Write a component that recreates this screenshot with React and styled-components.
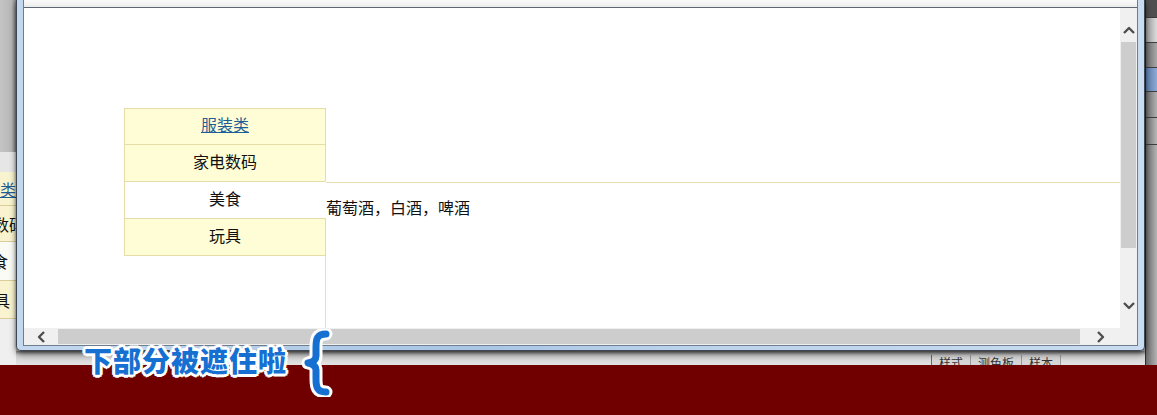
import styled, { createGlobalStyle } from "styled-components"

const GlobalStyle = createGlobalStyle`
  html, body {
    margin: 0;
    padding: 0;
    background: #c8c8c8;
  }
  body {
    font-family: "Noto Sans CJK SC", "Liberation Sans", sans-serif;
    font-size: 16px;
    color: #111;
  }
`

const categories = [
  { name: "服装类", link: true },
  { name: "家电数码" },
  { name: "美食", active: true },
  { name: "玩具" },
]

// the same menu, seen behind the window's left edge
const behindRows = [
  { name: "类", link: true, shift: 0, height: 33 },
  { name: "数码", shift: -9, height: 35 },
  { name: "食", shift: 8, height: 38, active: true },
  { name: "具", shift: 6, height: 37 },
]

const Chevron = ({ dir }) => {
  const pts = {
    up: "1,7 6,2 11,7",
    down: "1,2 6,7 11,2",
    left: "7,1 2,6 7,11",
    right: "2,1 7,6 2,11",
  }[dir]
  const vertical = dir === "up" || dir === "down"
  return (
    <svg width={vertical ? 12 : 9} height={vertical ? 9 : 12} viewBox={vertical ? "0 0 12 9" : "0 0 9 12"}>
      <polyline points={pts} fill="none" stroke="#4e4e4e" strokeWidth="2.4" strokeLinejoin="round" />
    </svg>
  )
}

const App = () => {
  return (
    <Screen>
      <GlobalStyle />
      <Desk>
        <BehindLeft>
          <BehindGray />
          <BehindLight />
          {behindRows.map(({ name, link, shift, height, active }) => (
            <BehindRow key={name} $h={height} $active={active}>
              <BehindText $shift={shift} $link={link}>{name}</BehindText>
            </BehindRow>
          ))}
          <BehindRest />
        </BehindLeft>

        <Middle>
          <Window>
            <Inner>
              <TopStrip />
              <Client>
                <Viewport>
                  <TabBox>
                    <Menu>
                      {categories.map(({ name, link, active }) => (
                        <MenuItem key={name} $active={active}>
                          {link ? <a href="#">{name}</a> : name}
                        </MenuItem>
                      ))}
                    </Menu>
                    <Panel>葡萄酒，白酒，啤酒</Panel>
                  </TabBox>
                </Viewport>
                <VScroll>
                  <VButton $top>
                    <Chevron dir="up" />
                  </VButton>
                  <VThumb />
                  <VTrack />
                  <VButton>
                    <Chevron dir="down" />
                  </VButton>
                </VScroll>
                <HScroll>
                  <HButton>
                    <Chevron dir="left" />
                  </HButton>
                  <HThumb />
                  <HButton $right>
                    <Chevron dir="right" />
                  </HButton>
                </HScroll>
                <Corner />
              </Client>
            </Inner>
          </Window>
          <Shelf>
            <ShelfTabs>
              <ShelfTab>样式</ShelfTab>
              <ShelfTab>测色板</ShelfTab>
              <ShelfTab>样本</ShelfTab>
            </ShelfTabs>
          </Shelf>
        </Middle>

        <BehindRight>
          <RightBlock $h={17} $bg="#4f4f4f" />
          <RightBlock $h={24} $bg="linear-gradient(to right, #9a9a9a, #dcdcdc)" />
          <RightBlock $h={24} $bg="linear-gradient(to right, #6a6a6a, #a9a9a9)" />
          <RightBlock $h={23} $bg="linear-gradient(to right, #5a7aa8, #8eaad6)" />
          <RightBlock $h={25} $bg="linear-gradient(to right, #6a6a6a, #b2b2b2)" />
          <RightBlock $h={26} $bg="linear-gradient(to right, #6e6e6e, #b8b8b8)" />
          <RightBlock $h={999} $bg="linear-gradient(to right, #6a6a6a, #b4b4b4)" />
        </BehindRight>
      </Desk>
      <RedBand />

      <Callout>下部分被遮住啦</Callout>
      <Brace width="32" height="68" viewBox="0 0 32 68">
        <path d="M25 5 C16 5 15 10 15 18 L15 27 C15 31 12 33 7 34 C12 35 15 37 15 41 L15 50 C15 58 16 63 25 63"
          fill="none" stroke="#ffffff" strokeWidth="13" strokeLinecap="round" strokeLinejoin="round" />
        <path d="M25 5 C16 5 15 10 15 18 L15 27 C15 31 12 33 7 34 C12 35 15 37 15 41 L15 50 C15 58 16 63 25 63"
          fill="none" stroke="#1570d2" strokeWidth="7" strokeLinecap="round" strokeLinejoin="round" />
      </Brace>
    </Screen>
  )
}

export default App

const Screen = styled.div`
  position: relative;
  width: 1157px;
  height: 415px;
  overflow: hidden;
  display: flex;
  flex-direction: column;
`
const Desk = styled.div`
  display: flex;
  height: 365px;
`
const BehindLeft = styled.div`
  width: 16px;
  display: flex;
  flex-direction: column;
  overflow: hidden;
  flex-shrink: 0;
`
const BehindGray = styled.div`
  height: 152px;
  background: linear-gradient(to right, #c4c4c4, #b8b8b8 70%, #8c8c8c);
`
const BehindLight = styled.div`
  height: 20px;
  background: #e6e6e6;
`
const BehindRow = styled.div`
  height: ${({ $h }) => $h}px;
  display: flex;
  justify-content: flex-end;
  align-items: center;
  background: ${({ $active }) => ($active ? "#fbfbf6" : "#f9f4cf")};
  border-bottom: 1px solid #d9cd9a;
  overflow: hidden;
`
const BehindText = styled.span`
  margin-right: ${({ $shift }) => $shift}px;
  white-space: nowrap;
  font-size: 16px;
  color: ${({ $link }) => ($link ? "#1f5d96" : "#111")};
  text-decoration: ${({ $link }) => ($link ? "underline" : "none")};
`
const BehindRest = styled.div`
  flex: 1;
  background: #efefef;
`
const Middle = styled.div`
  width: 1129px;
  flex-shrink: 0;
  display: flex;
  flex-direction: column;
`
const Window = styled.div`
  position: relative;
  z-index: 1;
  height: 351px;
  box-sizing: border-box;
  border: 1px solid #3f4852;
  border-top: none;
  border-radius: 0 0 5px 5px;
  padding: 0 6px 4px 6px;
  background: linear-gradient(to right, #c3d8ee, #a9c6e6 40%, #bcd3ec 60%, #c9dcf0);
  box-shadow: 0 3px 6px rgba(0, 0, 0, 0.55), 0 0 3px rgba(0, 0, 0, 0.4);
  display: flex;
`
const Inner = styled.div`
  flex: 1;
  border: 1px solid #6f7e8e;
  border-top: none;
  background: #fff;
  display: flex;
  flex-direction: column;
  min-width: 0;
`
const TopStrip = styled.div`
  height: 7px;
  background: linear-gradient(#fafafa, #ececec);
  border-bottom: 1px solid #5c6772;
`
const Client = styled.div`
  flex: 1;
  display: grid;
  grid-template-columns: 1fr 17px;
  grid-template-rows: 320px 17px;
`
const Viewport = styled.div`
  overflow: hidden;
  padding: 100px 0 0 100px;
  background: #fff;
`
const TabBox = styled.div`
  display: flex;
  align-items: flex-start;
`
const Menu = styled.ul`
  list-style: none;
  margin: 0;
  padding: 0;
  width: 202px;
  flex-shrink: 0;
  position: relative;
  z-index: 1;
`
const MenuItem = styled.li`
  box-sizing: border-box;
  height: 38px;
  margin-top: -1px;
  padding-top: 1px;
  line-height: 30px;
  text-align: center;
  font-size: 16px;
  background: ${({ $active }) => ($active ? "#ffffff" : "#fffdd6")};
  border: 1px solid #e6dca8;
  border-right-color: ${({ $active }) => ($active ? "#ffffff" : "#e6dca8")};
  &:first-child {
    margin-top: 0;
    height: 37px;
    padding-top: 0;
  }
  a {
    color: #1f5d96;
    text-decoration: underline;
  }
`
const Panel = styled.div`
  flex: 1;
  margin: 74px 0 0 -1px;
  height: 400px;
  border-top: 1px solid #e8dfb4;
  border-left: 1px solid #e8dfb4;
  padding-top: 14px;
  line-height: 21px;
  font-size: 16px;
`
const VScroll = styled.div`
  background: #f0f0f0;
  display: flex;
  flex-direction: column;
`
const VButton = styled.div`
  height: ${({ $top }) => ($top ? 34 : 31)}px;
  display: flex;
  justify-content: center;
  align-items: ${({ $top }) => ($top ? "flex-end" : "flex-start")};
  padding: ${({ $top }) => ($top ? "0 0 7px" : "4px 0 0")};
  box-sizing: border-box;
`
const VThumb = styled.div`
  height: 206px;
  margin: 0 1px;
  background: #cdcdcd;
`
const VTrack = styled.div`
  flex: 1;
`
const HScroll = styled.div`
  background: #f0f0f0;
  display: flex;
  align-items: stretch;
`
const HButton = styled.div`
  width: ${({ $right }) => ($right ? 40 : 34)}px;
  display: flex;
  align-items: center;
  justify-content: center;
  flex-shrink: 0;
`
const HThumb = styled.div`
  flex: 1;
  margin: 1px 0;
  background: #cdcdcd;
`
const Corner = styled.div`
  background: #f0f0f0;
`
const Shelf = styled.div`
  flex: 1;
  display: flex;
  justify-content: flex-end;
  padding-right: 84px;
  background: linear-gradient(#8e8e8e, #d0d0d0 4px, #e4e4e4);
  overflow: hidden;
`
const ShelfTabs = styled.div`
  display: flex;
  margin-top: 4px;
  border-left: 1px solid #6a6a6a;
  background: #d6d6d6;
`
const ShelfTab = styled.div`
  padding: 0 7px;
  font-size: 12px;
  line-height: 16px;
  color: #333;
  border-right: 1px solid #9a9a9a;
`
const BehindRight = styled.div`
  flex: 1;
  display: flex;
  flex-direction: column;
  overflow: hidden;
  border-left: 1px solid #2e2e2e;
`
const RightBlock = styled.div`
  flex-shrink: 0;
  height: ${({ $h }) => $h}px;
  background: ${({ $bg }) => $bg};
  border-bottom: 1px solid #3d3d3d;
`
const RedBand = styled.div`
  flex: 1;
  background: #700000;
`
const Callout = styled.div`
  position: absolute;
  left: 84px;
  top: 344px;
  z-index: 2;
  font-size: 28px;
  line-height: 32px;
  font-weight: 900;
  letter-spacing: 1px;
  color: #1570d2;
  white-space: nowrap;
  text-shadow:
    2px 0 0 #fff, -2px 0 0 #fff, 0 2px 0 #fff, 0 -2px 0 #fff,
    2px 2px 0 #fff, -2px -2px 0 #fff, 2px -2px 0 #fff, -2px 2px 0 #fff,
    3px 0 0 #fff, -3px 0 0 #fff, 0 3px 0 #fff, 0 -3px 0 #fff;
`
const Brace = styled.svg`
  position: absolute;
  left: 301px;
  top: 329px;
  z-index: 2;
`
